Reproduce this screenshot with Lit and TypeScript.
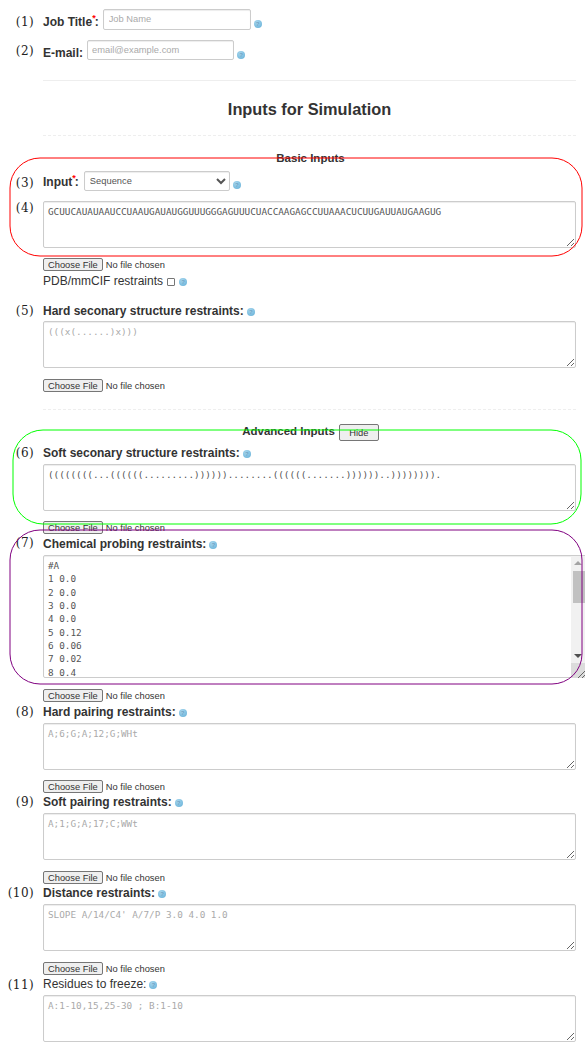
import { LitElement, html, css, svg } from "lit";
import { customElement } from "lit/decorators.js";

const SEQ = "GCUUCAUAUAAUCCUAAUGAUAUGGUUUGGGAGUUUCUACCAAGAGCCUUAAACUCUUGAUUAUGAAGUG";
const SOFT = "((((((((...((((((.........))))))........((((((.......))))))..)))))))).";
const PROBE = ["#A","1 0.0","2 0.0","3 0.0","4 0.0","5 0.12","6 0.06","7 0.02","8 0.4","9 0.35","10 0.18","11 0.07","12 0.03","13 0.0","14 0.21","15 0.44","16 0.3","17 0.09","18 0.02","19 0.0","20 0.15"].join("\n");

const NUMBERS: [string, number][] = [
  ["(1)", 22], ["(2)", 51], ["(3)", 183], ["(4)", 208], ["(5)", 311], ["(6)", 453],
  ["(7)", 543], ["(8)", 712], ["(9)", 802], ["(10)", 893], ["(11)", 985],
];

@customElement("app-root")
export class AppRoot extends LitElement {
  static styles = css`
    :host {
      display: block;
      position: relative;
      height: 1051px;
      overflow: hidden;
      font-family: "Liberation Sans", Arial, sans-serif;
      font-size: 12px;
      color: #333;
      background: #fff;
    }
    .form { padding: 9px 9px 0 43px; width: 533px; }
    .row { display: flex; align-items: flex-start; height: 21px; }
    .row + .row { margin-top: 10px; }
    .row label { font-weight: bold; line-height: 14px; margin: 6px 4px 0 0; white-space: nowrap; }
    .req { color: #f00; font-size: 9px; font-weight: bold; vertical-align: super; line-height: 0; margin-right: -1px; }
    input.text, select {
      box-sizing: border-box;
      border: 1px solid #ccc;
      border-radius: 2px;
      font: 9.33px "Liberation Sans", Arial, sans-serif;
      color: #555;
      background: #fff;
      box-shadow: inset 0 1px 1px rgba(0,0,0,.075);
      padding: 0 5px;
      outline: none;
    }
    input.text::placeholder { color: #aaa; }
    input.job { width: 148px; height: 21px; padding-bottom: 2px; }
    input.mail { width: 147px; height: 20px; padding-left: 4px; }
    .help {
      display: inline-block;
      flex: none;
      width: 8px;
      height: 8px;
      border-radius: 50%;
      background: radial-gradient(circle at 40% 30%, #a6d6ee, #62aed6);
      color: #6fa3c4;
      font: bold 6px/8px "Liberation Sans", Arial, sans-serif;
      text-align: center;
      margin-left: 3px;
    }
    .row .help { margin-top: 11px; }
    hr { border: 0; margin: 0; height: 1px; }
    hr.solid { background: #eee; margin-top: 19px; }
    hr.dash { border-top: 1px dashed #eee; height: 0; }
    h2 {
      margin: 0;
      font-size: 16.33px;
      line-height: 20px;
      font-weight: bold;
      text-align: center;
      padding: 18px 0 16px;
    }
    .legend {
      display: flex;
      justify-content: center;
      align-items: center;
      font-size: 11.5px;
      font-weight: bold;
      line-height: 14px;
      gap: 4px;
      padding-left: 2px;
    }
    .legend.basic { margin-top: 15px; }
    .legend.adv { margin-top: 14px; height: 17px; }
    .legend.adv span { padding-bottom: 3px; }
    .legend button {
      box-sizing: border-box;
      width: 40px;
      height: 17px;
      padding: 0;
      font: 9.33px "Liberation Sans", Arial, sans-serif;
      color: #333;
      background: #efefef;
      border: 1px solid #767676;
      border-radius: 2px;
    }
    .inputrow { display: flex; align-items: flex-start; height: 20px; margin-top: 6px; }
    .inputrow label { font-weight: bold; line-height: 14px; margin: 4px 4px 0 0; }
    .inputrow select { width: 146px; height: 20px; padding: 0 0 0 1px; margin-left: 1px; }
    .inputrow .help { margin-top: 10px; }
    textarea {
      display: block;
      box-sizing: border-box;
      width: 533px;
      height: 47px;
      margin: 0;
      padding: 3px 4px;
      border: 1px solid #ccc;
      border-radius: 2px;
      font: 9.33px/13.33px "DejaVu Sans Mono", "Liberation Mono", monospace;
      color: #555;
      background: #fff;
      box-shadow: inset 0 1px 1px rgba(0,0,0,.075);
      outline: none;
      white-space: pre;
    }
    textarea::placeholder { color: #aaa; }
    .probe { position: relative; width: 544px; height: 123px; margin-top: 4px; }
    .probe textarea { width: 544px; height: 123px; resize: none; overflow: hidden; }
    .sb {
      position: absolute;
      left: 528px;
      top: 1px;
      width: 15px;
      height: 107px;
      background: #f1f1f1;
    }
    .sb .thumb {
      position: absolute;
      left: 2px;
      top: 15px;
      width: 13px;
      height: 32px;
      background: #c1c1c1;
    }
    .sb .up, .sb .down {
      position: absolute;
      left: 3px;
      width: 0;
      height: 0;
      border-left: 4px solid transparent;
      border-right: 4px solid transparent;
    }
    .sb .up { top: 5px; border-bottom: 4px solid #a3a3a3; }
    .sb .down { bottom: 5px; border-top: 4px solid #505050; }
    .grip { position: absolute; left: 528px; top: 108px; display: block; }
    input[type="file"] {
      display: block;
      height: 13px;
      margin: 10px 0 0;
      font: 9.33px "Liberation Sans", Arial, sans-serif;
      color: #333;
    }
    input[type="file"].f11 { margin-top: 11px; }
    input[type="file"]::file-selector-button {
      font: inherit;
      color: #333;
      height: 13px;
      padding: 0 4px;
      margin-right: 3px;
      background: #efefef;
      border: 1px solid #767676;
      border-radius: 2px;
    }
    .pdb { display: flex; align-items: center; height: 14px; margin-top: 3px; }
    .pdb input {
      appearance: none;
      box-sizing: border-box;
      width: 8px;
      height: 8px;
      margin: 2px 0 0 4px;
      border: 1px solid #767676;
      border-radius: 1px;
      background: #fff;
    }
    .pdb .help { margin: 2px 0 0 4px; }
    .head { display: flex; align-items: flex-start; line-height: 14px; height: 14px; font-weight: bold; }
    .head .help { margin-top: 4px; }
    .head.plain { font-weight: normal; }
    .head + textarea { margin-top: 4px; }
    .head + textarea.t3 { margin-top: 3px; }
    .seq { margin-top: 10px; }
    .gap-l { margin-top: 16px; }
    .gap-s { margin-top: 3px; }
    .gap-xs { margin-top: 2px; }
    .adv-first { margin-top: 5px; }
    hr.dash.second { margin-top: 17px; }
    .num {
      position: absolute;
      right: 551px;
      font: 12px/16px "DejaVu Serif", serif;
      letter-spacing: 0.4px;
      color: #222;
      white-space: nowrap;
    }
    .ovals { position: absolute; left: 0; top: 0; pointer-events: none; }
  `;

  private file(wide = false) {
    return html`<input type="file" class=${wide ? "f11" : ""} />`;
  }

  private help() {
    return html`<span class="help">?</span>`;
  }

  render() {
    return html`
      <div class="form">
        <div class="row">
          <label>Job Title<span class="req">*</span>:</label>
          <input class="text job" placeholder="Job Name" />${this.help()}
        </div>
        <div class="row">
          <label>E-mail:</label>
          <input class="text mail" placeholder="email@example.com" />${this.help()}
        </div>
        <hr class="solid" />
        <h2>Inputs for Simulation</h2>
        <hr class="dash" />

        <div class="legend basic">Basic Inputs</div>
        <div class="inputrow">
          <label>Input<span class="req">*</span>:</label>
          <select><option>Sequence</option></select>${this.help()}
        </div>
        <textarea class="seq" .value=${SEQ}></textarea>
        ${this.file()}
        <div class="pdb">PDB/mmCIF restraints <input type="checkbox" />${this.help()}</div>

        <div class="head gap-l">Hard seconary structure restraints:${this.help()}</div>
        <textarea class="t3" placeholder="(((x(......)x)))"></textarea>
        ${this.file(true)}
        <hr class="dash second" />

        <div class="legend adv"><span>Advanced Inputs</span><button>Hide</button></div>
        <div class="head adv-first">Soft seconary structure restraints:${this.help()}</div>
        <textarea .value=${SOFT}></textarea>
        ${this.file()}

        <div class="head gap-s">Chemical probing restraints:${this.help()}</div>
        <div class="probe">
          <textarea .value=${PROBE}></textarea>
          <div class="sb">
            <span class="up"></span>
            <span class="thumb"></span>
            <span class="down"></span>
          </div>
          <svg class="grip" width="16" height="15" viewBox="0 0 16 15">
            <rect width="16" height="15" fill="#dcdcdc" />
            <path d="M7 15 15 7M11 15 15 11" stroke="#666" fill="none" />
          </svg>
        </div>
        ${this.file(true)}

        <div class="head gap-s">Hard pairing restraints:${this.help()}</div>
        <textarea placeholder="A;6;G;A;12;G;WHt"></textarea>
        ${this.file()}

        <div class="head gap-xs">Soft pairing restraints:${this.help()}</div>
        <textarea placeholder="A;1;G;A;17;C;WWt"></textarea>
        ${this.file(true)}

        <div class="head gap-xs">Distance restraints:${this.help()}</div>
        <textarea placeholder="SLOPE A/14/C4' A/7/P 3.0 4.0 1.0"></textarea>
        ${this.file(true)}

        <div class="head plain gap-xs">Residues to freeze:${this.help()}</div>
        <textarea placeholder="A:1-10,15,25-30 ; B:1-10"></textarea>
      </div>

      ${NUMBERS.map(([t, y]) => html`<span class="num" style="top:${y - 8}px">${t}</span>`)}

      <svg class="ovals" width="585" height="1051" viewBox="0 0 585 1051" fill="none">
        ${svg`<rect x="10" y="158" width="572" height="98" rx="30" stroke="#f00" />`}
        ${svg`<rect x="13" y="430" width="568" height="94" rx="30" stroke="#0f0" />`}
        ${svg`<rect x="10" y="530" width="572" height="154" rx="30" stroke="#800080" />`}
      </svg>
    `;
  }
}
